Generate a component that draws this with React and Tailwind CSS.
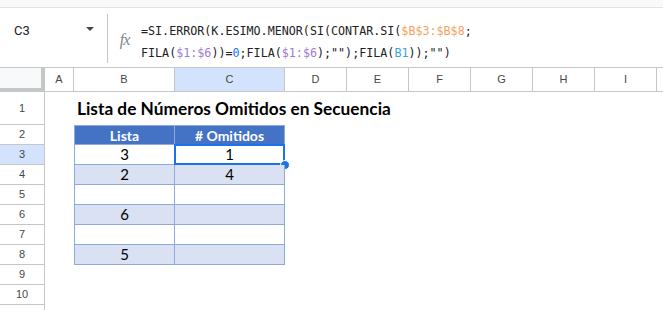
import React from "react";

const cols = [
  { key: "A", w: "w-[29px]" },
  { key: "B", w: "w-[101px]" },
  { key: "C", w: "w-[110px]" },
  { key: "D", w: "w-[62px]" },
  { key: "E", w: "w-[62px]" },
  { key: "F", w: "w-[62px]" },
  { key: "G", w: "w-[62px]" },
  { key: "H", w: "w-[62px]" },
  { key: "I", w: "w-[62px]" },
];

// rows 3..8 of the table: [lista, omitidos]
const tableRows = [
  { n: 3, b: "3", c: "1", band: false },
  { n: 4, b: "2", c: "4", band: true },
  { n: 5, b: "", c: "", band: false },
  { n: 6, b: "6", c: "", band: true },
  { n: 7, b: "", c: "", band: false },
  { n: 8, b: "5", c: "", band: true },
];

const RowHead = ({ n, active }) => (
  <div
    className={`w-[45px] shrink-0 flex items-center justify-center border-r border-b border-[#c4c7c5] text-[11px] text-[#444746] ${
      active ? "bg-[#d3e3fd]" : "bg-white"
    }`}
  >
    {n}
  </div>
);

const Formula = () => (
  <div className="font-['DejaVu_Sans_Mono','Liberation_Mono',monospace] text-[11.7px] leading-[22px] text-[#202124] pt-[12px] whitespace-pre">
    <div>
      =SI.ERROR(K.ESIMO.MENOR(SI(CONTAR.SI(
      <span className="text-[#f4a15d]">$B$3:$B$8</span>;
    </div>
    <div>
      FILA(<span className="text-[#9e7bd4]">$1:$6</span>))=
      <span className="text-[#1a73e8]">0</span>;FILA(
      <span className="text-[#9e7bd4]">$1:$6</span>);"");FILA(
      <span className="text-[#3aa3d9]">B1</span>));"")
    </div>
  </div>
);

export default function App() {
  return (
    <div className="w-[663px] h-[310px] overflow-hidden bg-white font-['Liberation_Sans',Arial,sans-serif]">
      <div className="h-[8px] bg-[#f8f9fa] border-b border-[#e3e3e3]" />

      {/* formula bar */}
      <div className="h-[59px] flex">
        <div className="w-[107px] shrink-0 flex items-start pt-[13px] pl-[14px] pr-[13px]">
          <span className="font-['Roboto',sans-serif] text-[13px] text-[#202124]">C3</span>
          <span className="ml-auto mt-[6px] w-0 h-0 border-l-[4px] border-r-[4px] border-t-[4px] border-l-transparent border-r-transparent border-t-[#444746]" />
        </div>
        <div className="w-px bg-[#c4c7c5] mt-[6px] mb-[4px]" />
        <div className="w-[33px] shrink-0 flex justify-center pt-[20px]">
          <span className="font-['Liberation_Serif',serif] italic text-[16px] text-[#80868b] tracking-[-1px]">fx</span>
        </div>
        <Formula />
      </div>

      {/* column header */}
      <div className="flex h-[25px] border-t border-b border-[#c4c7c5]">
        <div className="w-[45px] shrink-0 bg-[#f8f9fa] border-r-[4px] border-b-[3px] border-[#c4c7c5]" />
        {cols.map((c) => (
          <div
            key={c.key}
            className={`${c.w} shrink-0 flex items-center justify-center border-r border-[#c4c7c5] text-[11px] text-[#444746] ${
              c.key === "C" ? "bg-[#d3e3fd]" : ""
            }`}
          >
            {c.key}
          </div>
        ))}
        <div className="flex-1" />
      </div>

      {/* row 1 */}
      <div className="flex h-[33px]">
        <RowHead n={1} />
        <div className="w-[29px] shrink-0" />
        <div className="flex-1 flex items-center pl-[3px] pt-[1px] font-['Lato',sans-serif] font-bold text-[17.3px] text-black whitespace-nowrap">
          Lista de Números Omitidos en Secuencia
        </div>
      </div>

      {/* row 2: table header */}
      <div className="flex h-[20px]">
        <RowHead n={2} />
        <div className="w-[29px] shrink-0" />
        <div className="w-[101px] shrink-0 bg-[#4472c4] border border-[#8eaadb] flex items-center justify-center font-['Lato',sans-serif] font-bold text-[14px] text-white">
          Lista
        </div>
        <div className="w-[110px] shrink-0 bg-[#4472c4] border-t border-r border-b border-[#8eaadb] flex items-center justify-center font-['Lato',sans-serif] font-bold text-[14px] text-white">
          # Omitidos
        </div>
      </div>

      {tableRows.map((r) => (
        <div key={r.n} className="flex h-[20px]">
          <RowHead n={r.n} active={r.n === 3} />
          <div className="w-[29px] shrink-0" />
          <div
            className={`w-[101px] shrink-0 border-l border-r border-b border-[#8eaadb] flex items-center justify-center font-['Lato',sans-serif] text-[15px] text-black ${
              r.band ? "bg-[#d9e1f2]" : "bg-white"
            }`}
          >
            {r.b}
          </div>
          <div
            className={`relative w-[110px] shrink-0 border-r border-b border-[#8eaadb] flex items-center justify-center font-['Lato',sans-serif] text-[15px] text-black ${
              r.band ? "bg-[#d9e1f2]" : "bg-white"
            }`}
          >
            {r.c}
            {r.n === 3 && (
              <>
                <div className="absolute -left-px -top-px -right-px -bottom-px border-2 border-[#1a73e8]" />
                <div className="absolute -right-[6px] -bottom-[6px] w-[10px] h-[10px] rounded-full bg-[#1a73e8] border border-white" />
              </>
            )}
          </div>
        </div>
      ))}

      {[9, 10].map((n) => (
        <div key={n} className="flex h-[20px]">
          <RowHead n={n} />
        </div>
      ))}
      <div className="flex h-[20px]">
        <div className="w-[45px] shrink-0 border-r border-[#c4c7c5]" />
      </div>
    </div>
  );
}
